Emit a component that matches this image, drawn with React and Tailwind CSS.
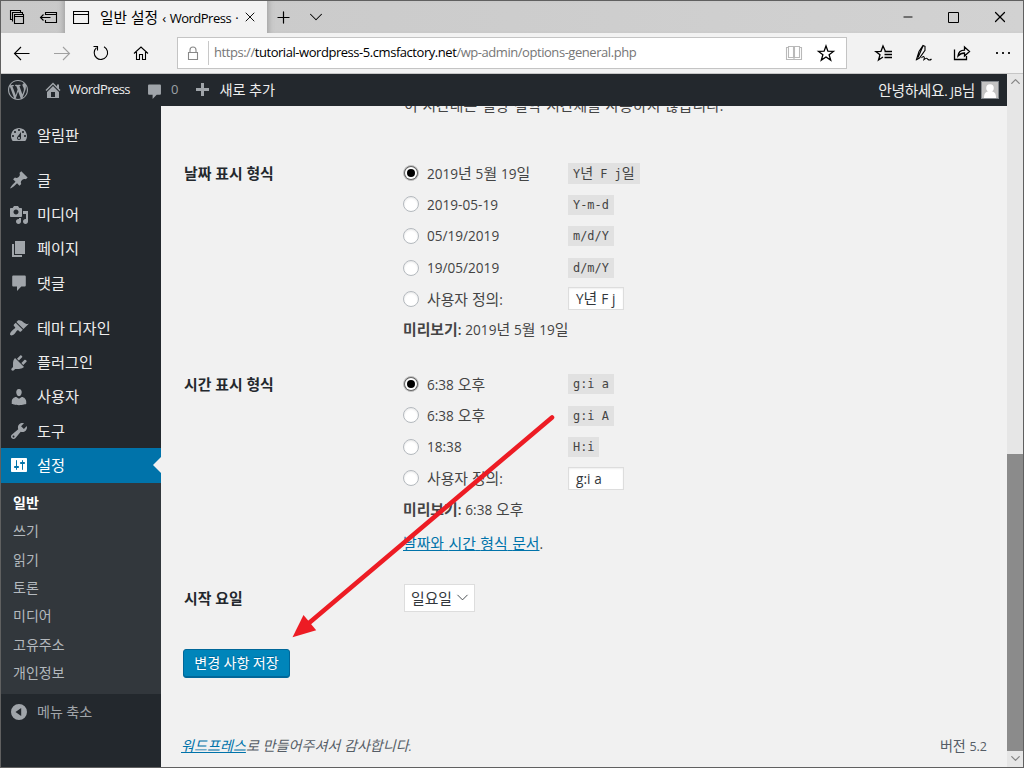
import { Minus, X, Plus, ChevronDown, ChevronUp } from 'lucide-react';

const paths = {
  wordpress: 'M20 10c0-5.51-4.49-10-10-10C4.48 0 0 4.49 0 10c0 5.52 4.48 10 10 10 5.51 0 10-4.48 10-10zM7.78 15.37L4.37 6.22c.55-.02 1.17-.08 1.17-.08.5-.06.44-1.13-.06-1.11 0 0-1.45.11-2.37.11-.18 0-.37 0-.58-.01C4.12 2.69 6.87 1.11 10 1.11c2.33 0 4.45.87 6.05 2.34-.68-.11-1.65.39-1.65 1.58 0 .74.45 1.36.9 2.1.35.61.55 1.36.55 2.46 0 1.49-1.4 5-1.4 5l-3.03-8.37c.54-.02.82-.17.82-.17.5-.05.44-1.25-.06-1.22 0 0-1.44.12-2.38.12-.87 0-2.33-.12-2.33-.12-.5-.03-.56 1.2-.06 1.22l.92.08 1.26 3.41zM17.41 10c.24-.64.74-1.87.43-4.25.7 1.29 1.05 2.71 1.05 4.25 0 3.29-1.73 6.24-4.4 7.78.97-2.59 1.94-5.2 2.92-7.78zM6.1 18.09C3.12 16.65 1.11 13.53 1.11 10c0-1.3.23-2.48.72-3.59C3.25 10.3 4.67 14.2 6.1 18.09zm4.03-6.63l2.58 6.98c-.86.29-1.76.45-2.71.45-.79 0-1.57-.11-2.29-.33.81-2.38 1.62-4.74 2.42-7.1z',
  home: 'M16 8.5l1.53 1.53-1.06 1.06L10 4.6l-6.47 6.49-1.06-1.06L10 2.5l4 4v-2h2v4zm-6-2.46l6 5.99V18H4v-5.97zM12 17v-5H8v5h4z',
  plus: 'M17 7v3h-5v5H9v-5H4V7h5V2h3v5h5z',
  dashboard: 'M3.76 16h12.48c1.1-1.37 1.76-3.11 1.76-5 0-4.42-3.58-8-8-8s-8 3.58-8 8c0 1.89 .66 3.63 1.76 5zM10 4c.55 0 1 .45 1 1s-.45 1-1 1-1-.45-1-1 .45-1 1-1zM6 6c.55 0 1 .45 1 1s-.45 1-1 1-1-.45-1-1 .45-1 1-1zm8 0c.55 0 1 .45 1 1s-.45 1-1 1-1-.45-1-1 .45-1 1-1zm-5.37 5.55L12 7v6c0 1.1-.9 2-2 2s-2-.9-2-2c0-.57.24-1.08.63-1.45zM4 10c.55 0 1 .45 1 1s-.45 1-1 1-1-.45-1-1 .45-1 1-1zm12 0c.55 0 1 .45 1 1s-.45 1-1 1-1-.45-1-1 .45-1 1-1zm-5 3c0-.55-.45-1-1-1s-1 .45-1 1 .45 1 1 1 1-.45 1-1z',
  post: 'M10.44 3.02l1.82-1.82 6.36 6.35-1.83 1.82c-1.05-.68-2.48-.57-3.41.36l-.75.75c-.92.93-1.04 2.35-.35 3.41l-1.83 1.82-2.41-2.41-2.8 2.79c-.42.42-3.38 2.71-3.8 2.29s1.86-3.39 2.28-3.81l2.79-2.79L4.1 9.36l1.83-1.82c1.05.69 2.48.57 3.4-.36l.75-.75c.93-.92 1.05-2.35.36-3.41z',
  media: 'M13 11V4c0-.55-.45-1-1-1h-1.67L9 1H5L3.67 3H2c-.55 0-1 .45-1 1v7c0 .55.45 1 1 1h10c.55 0 1-.45 1-1zM7 4.5c1.38 0 2.5 1.12 2.5 2.5S8.38 9.5 7 9.5 4.5 8.38 4.5 7 5.62 4.5 7 4.5zM14 6h5v10.5c0 1.38-1.12 2.5-2.5 2.5S14 17.88 14 16.5s1.12-2.5 2.5-2.5c.17 0 .34.02.5.05V9h-3V6zm-4 8.05V13h2v3.5c0 1.38-1.12 2.5-2.5 2.5S7 17.88 7 16.5 8.12 14 9.5 14c.17 0 .34.02.5.05z',
  page: 'M6 15V2h10v13H6zm-1 1h8v2H3V5h2v11z',
  comments: 'M4.5 2.5h11c.8 0 1.3.5 1.3 1.3v8.4c0 .8-.5 1.3-1.3 1.3h-3.2L8 18v-4.500H4.500c-.8 0-1.300-.5-1.300-1.300V3.800c0-.8.5-1.300 1.300-1.300z',
  appearance: 'M14.48 11.06L7.41 3.99l1.5-1.5c.5-.56 2.3-.47 3.51.32 1.21.8 1.43 1.28 2.91 2.1 1.18.64 2.45 1.26 4.45.85zm-.71.71L6.7 4.7 4.93 6.47c-.39.39-.39 1.02 0 1.41l1.06 1.06c.39.39.39 1.03 0 1.42-.6.6-1.43 1.11-2.21 1.69-.35.26-.7.53-1.01.84C1.43 14.23.4 16.08 1.4 17.07c.99 1 2.84-.03 4.18-1.36.31-.31.58-.66.85-1.02.57-.78 1.08-1.61 1.69-2.21.39-.39 1.02-.39 1.41 0l1.06 1.06c.39.39 1.02.39 1.41 0z',
  plugins: 'M13.11 4.36L9.87 7.6 8 5.73l3.24-3.24c.35-.34 1.05-.2 1.56.32.52.51.66 1.21.31 1.55zm-8 1.77l.91-1.12 9.01 9.01-1.19.84c-.71.71-2.63 1.16-3.82 1.16H6.14L4.9 17.26c-.59.59-1.54.59-2.12 0-.59-.58-.59-1.53 0-2.12l1.24-1.24v-3.88c0-1.13.4-3.19 1.09-3.89zm7.26 3.97l3.24-3.24c.34-.35 1.04-.21 1.55.31.52.51.66 1.21.31 1.55l-3.24 3.25z',
  users: 'M10 9.25c-2.27 0-2.73-3.44-2.73-3.44C7 4.02 7.82 2 9.97 2c2.16 0 2.98 2.02 2.71 3.81 0 0-.41 3.44-2.68 3.44zm0 2.57L12.72 10c2.39 0 4.52 2.33 4.52 4.53v2.49s-3.65 1.13-7.24 1.13c-3.65 0-7.24-1.13-7.24-1.13v-2.49c0-2.25 1.94-4.48 4.47-4.48z',
  tools: 'M16.68 9.77c-1.34 1.34-3.3 1.67-4.95.99l-5.41 6.52c-.99.99-2.59.99-3.58 0s-.99-2.59 0-3.57l6.52-5.42c-.68-1.65-.35-3.61.99-4.95 1.28-1.28 3.12-1.62 4.72-1.06l-2.89 2.89 2.82 2.82 2.86-2.87c.53 1.58.18 3.39-1.08 4.65zM3.81 16.21c.4.39 1.04.39 1.43 0 .4-.4.4-1.04 0-1.43-.39-.4-1.03-.4-1.43 0-.39.39-.39 1.03 0 1.43z',
  settings: 'M18 16V4c0-.55-.45-1-1-1H3c-.55 0-1 .45-1 1v12c0 .55.45 1 1 1h14c.55 0 1-.45 1-1zM8 11h1c.55 0 1 .45 1 1s-.45 1-1 1H8v1.5c0 .28-.22.5-.5.5s-.5-.22-.5-.5V13H6c-.55 0-1-.45-1-1s.45-1 1-1h1V5.5c0-.28.22-.5.5-.5s.5.22.5.5V11zm5-2h-1c-.55 0-1-.45-1-1s.45-1 1-1h1V5.5c0-.28.22-.5.5-.5s.5.22.5.5V7h1c.55 0 1 .45 1 1s-.45 1-1 1h-1v5.5c0 .28-.22.5-.5.5s-.5-.22-.5-.5V9z',
  collapse: 'M10 2a8 8 0 1 0 0 16 8 8 0 0 0 0-16zm2.200 4v8L6.500 10z',
};

const menu = [
  { label: '알림판', icon: 'dashboard' },
  { divider: true },
  { label: '글', icon: 'post' },
  { label: '미디어', icon: 'media' },
  { label: '페이지', icon: 'page' },
  { label: '댓글', icon: 'comments' },
  { divider: true },
  { label: '테마 디자인', icon: 'appearance' },
  { label: '플러그인', icon: 'plugins' },
  { label: '사용자', icon: 'users' },
  { label: '도구', icon: 'tools' },
  { label: '설정', icon: 'settings', active: true },
];

const submenu = ['일반', '쓰기', '읽기', '토론', '미디어', '고유주소', '개인정보'];

const dateFormats = [
  { label: '2019년 5월 19일', code: 'Y년 F j일', checked: true },
  { label: '2019-05-19', code: 'Y-m-d' },
  { label: '05/19/2019', code: 'm/d/Y' },
  { label: '19/05/2019', code: 'd/m/Y' },
];

const timeFormats = [
  { label: '6:38 오후', code: 'g:i a', checked: true },
  { label: '6:38 오후', code: 'g:i A' },
  { label: '18:38', code: 'H:i' },
];

function Icon({ name, size = 20, className = '' }) {
  return (
    <svg width={size} height={size} viewBox="0 0 20 20" fill="currentColor" fillRule="evenodd" className={`shrink-0 ${className}`}>
      <path d={paths[name]} />
    </svg>
  );
}

// Hangul runs are set a little larger than the latin text around them
function Mixed({ text, ko = 'text-[1.13em]' }) {
  return text.split(/([가-힣]+)/).map((part, i) =>
    i % 2 ? <span key={i} className={ko}>{part}</span> : part
  );
}

function Body({ text }) {
  return <Mixed text={text} ko="text-[1.095em]" />;
}

function Line({ children, className = '' }) {
  return (
    <svg viewBox="0 0 20 20" width="20" height="20" fill="none" stroke="currentColor" strokeWidth="1.1" className={`shrink-0 ${className}`}>
      {children}
    </svg>
  );
}

function TitleBar() {
  return (
    <div className="flex h-8 bg-linear-to-r from-[#c9c9c9] via-[#cdcdcd] to-[#d2d2d2] text-black">
      <div className="flex w-16 items-center shadow-[inset_-6px_0_6px_-5px_#999]">
        <Line className="ml-1.5">
          <path d="M5.500 12.500h-2v-9h10v2M5.500 14.500v-9h10v2M7.500 7.500h9v9h-9zM7.500 9.500h9" />
        </Line>
        <Line className="ml-3">
          <path d="M6.500 8V5.500h11v10h-11V13M6.500 7.500h11M1.500 10.500h10M4.500 7.500l-3 3 3 3" />
        </Line>
      </div>
      <div className="flex w-[202px] items-center bg-[#f2f2f2] pl-2">
        <Line>
          <path d="M.5 4.500h15v12H.5zM.5 7.500h15" />
        </Line>
        <span className="ml-[7px] w-[137px] text-[13px] tracking-[-0.5px] whitespace-nowrap [word-spacing:1.2px]">
          <Mixed text="일반 설정 ‹ WordPress ·" ko="text-[1.13em] tracking-normal" />
        </span>
        <X size={16} strokeWidth={1.4} className="ml-[5px] shrink-0" />
      </div>
      <div className="flex flex-1 items-center shadow-[inset_6px_0_6px_-5px_#999]">
        <Plus size={19} strokeWidth={1.5} className="ml-[7px]" />
        <ChevronDown size={22} strokeWidth={1.1} className="ml-3" />
        <div className="ml-auto flex items-center">
          <Minus size={14} strokeWidth={1.6} />
          <svg width="11" height="11" viewBox="0 0 11 11" fill="none" stroke="currentColor" className="ml-[33px]"><path d="M.5.500h10v10H.5z" /></svg>
          <X size={18} strokeWidth={1.6} className="mr-[14px] ml-8" />
        </div>
      </div>
    </div>
  );
}

function Toolbar() {
  return (
    <div className="flex h-[41px] items-center border-b border-[#c6c6c6] bg-[#f2f2f2] pl-[11px] text-black">
      <Line><path d="M17.500 10.500h-15M9 4l-6.500 6.500L9 17" /></Line>
      <Line className="ml-5 text-[#a0a0a0]"><path d="M2 10.500h15M11 4l6.500 6.500L11 17" /></Line>
      <Line className="ml-[19px]"><path d="M5.500 4.700a6.700 6.700 0 1 0 7.500-.9M2.500 3.500h4v4" /></Line>
      <Line className="ml-5"><path d="M3 10.500l7-6.500 7 6.500M5.500 9v7.500h3V11.500h3v5h3V9" /></Line>
      <div className="ml-[26px] flex h-8 w-[670px] items-center border border-[#c4c4c4] bg-white">
        <Line className="ml-[5px] text-[#888]"><path d="M5.500 9.500h9v7h-9zM7 9.500V7a3 3 0 0 1 6 0v2.500" /></Line>
        <div className="ml-[5px] h-6 w-px bg-[#c8c8c8]" />
        <div className="ml-[5px] text-[13px] tracking-[-0.45px] whitespace-nowrap text-[#767676]">
          https://<span className="text-black">tutorial-wordpress-5.cmsfactory.net</span>/wp-admin/options-general.php
        </div>
        <Line className="ml-auto text-[#b9b9b9]">
          <path d="M4.500 4.500h-2v12h15v-12h-2M4.500 3.500h5v11h-5zM10.500 3.500h5v11h-5zM10 14.500v2" />
        </Line>
        <Line className="mr-2.5 ml-3">
          <path d="M10 3l1.900 5.200 5.600.2-4.400 3.400 1.600 5.300L10 14l-4.700 3.100 1.600-5.300-4.400-3.400 5.600-.2z" strokeWidth="1.300" />
        </Line>
      </div>
      <Line className="ml-[27px]">
        <path d="M11.500 8.500L9 3 7 8.300l-5.200.2L6 11.800 4.500 17 9 14M10.500 11.500h7.500M10.500 14.500h7.500M10.500 8.500h7.500" strokeWidth="1.300" />
      </Line>
      <Line className="ml-5">
        <path d="M2.500 16.500L5 8.500l4-6 2 .8v4L5.500 15zM9 3L4 14.500M2 17l3.500-2M7.500 15c2-2.500 3.500-1.500 2.500 1.500 2-1.500 3-2 4 0 1.500 1 2.500.5 3.500-.5" />
      </Line>
      <Line className="ml-[18px]">
        <path d="M2.500 6.500v10h12V13M6 13c.5-4 3-5.800 6.500-5.800V4l5 4.500-5 4.500V10c-2.500 0-4.500.8-6.500 3z" strokeWidth="1.300" />
      </Line>
      <div className="ml-[24px] flex gap-1">
        {[0, 1, 2].map((n) => <span key={n} className="size-0.5 bg-[#222]" />)}
      </div>
    </div>
  );
}

function AdminBar() {
  return (
    <div className="flex h-8 items-center bg-[#23282d] pl-[7px] text-[13px] text-[#eee]">
      <Icon name="wordpress" className="text-[#a0a5aa]" />
      <Icon name="home" className="ml-[15px] text-[#a0a5aa]" />
      <span className="ml-1.5 tracking-[-0.55px]">WordPress</span>
      <Icon name="comments" size={19} className="mt-0.5 ml-[15px] text-[#a0a5aa]" />
      <span className="ml-[7px] text-[#9ca1a6]">0</span>
      <Icon name="plus" size={20} className="mt-0.5 ml-[14px] text-[#a0a5aa]" />
      <span className="ml-[7px]"><Mixed text="새로 추가" ko="text-[14.2px]" /></span>
      <span className="ml-auto tracking-[-0.3px]"><Mixed text="안녕하세요. JB님" /></span>
      <div className="mr-2 ml-1.5 size-[18px] border border-[#82878c] bg-[#c3c3c3]">
        <svg viewBox="0 0 16 16" fill="white"><circle cx="8" cy="6" r="3.800" /><path d="M2 16c0-5 2-7 6-7s6 2 6 7z" /></svg>
      </div>
    </div>
  );
}

function Sidebar() {
  return (
    <aside className="w-40 shrink-0 bg-[#23282d] pt-3 text-[13.5px] text-[#eee]">
      {menu.map((item, i) =>
        item.divider ? (
          <div key={i} className="h-[11px]" />
        ) : (
          <div key={i} className={`relative flex h-[34.25px] items-center pl-2 ${item.active ? 'bg-[#0073aa] text-white' : ''}`}>
            <Icon name={item.icon} className={item.active ? 'text-white' : 'text-[#a0a5aa]'} />
            <span className="ml-2"><Mixed text={item.label} /></span>
            {item.active && (
              <span className="absolute top-[9px] right-0 border-y-8 border-r-8 border-y-transparent border-r-[#f1f1f1]" />
            )}
          </div>
        )
      )}
      <ul className="h-[211.5px] bg-[#32373c] pt-1.5 pl-3 text-[14px] text-[#b4b9be]">
        {submenu.map((label, i) => (
          <li key={label} className={`flex h-[28.3px] items-center ${i === 0 ? 'font-semibold text-white' : ''}`}>
            {label}
          </li>
        ))}
      </ul>
      <div className="flex h-[35px] items-center pl-2 text-[12.5px] text-[#a0a5aa]">
        <Icon name="collapse" />
        <span className="ml-2"><Mixed text="메뉴 축소" /></span>
      </div>
    </aside>
  );
}

function Radio({ checked }) {
  return checked ? (
    <span className="flex size-4 items-center justify-center rounded-full border border-[#c4c4c4] bg-[#666] p-px">
      <span className="flex size-3 items-center justify-center rounded-full bg-white">
        <span className="size-2 rounded-full bg-black" />
      </span>
    </span>
  ) : (
    <span className="size-4 rounded-full border border-[#b4b9be] bg-white shadow-[inset_0_1px_2px_rgba(0,0,0,0.1)]" />
  );
}

function FormatField({ title, formats, custom, preview, children }) {
  return (
    <div className="flex">
      <div className="w-[220px] pt-[5px] pl-px font-semibold text-[#23282d]"><Body text={title} /></div>
      <div>
        {formats.map((f) => (
          <div key={f.code} className="flex h-[31.6px] items-center">
            <Radio checked={f.checked} />
            <span className={`ml-2 w-[141px] ${/[가-힣]/.test(f.label) ? '' : 'pt-px'}`}><Body text={f.label} /></span>
            <code className="mt-px bg-[#e1e1e1] px-[5px] pt-px font-['DejaVu_Sans_Mono','Noto_Sans_CJK_KR',monospace] text-[11.9px] leading-[19px] [word-spacing:0]">
              <Mixed text={f.code} ko="text-[1.18em]" />
            </code>
          </div>
        ))}
        <div className="flex h-[31px] items-center">
          <Radio />
          <span className="ml-2 w-[141px]"><Body text="사용자 정의:" /></span>
          <div className="h-[23px] w-14 border border-[#ddd] bg-white px-[7px] leading-[21px] whitespace-pre text-[#32373c] shadow-[inset_0_1px_2px_rgba(0,0,0,0.07)]">
            <Body text={custom} />
          </div>
        </div>
        <div className="flex h-[31px] items-center pb-px whitespace-pre">
          <strong className="font-semibold"><Body text="미리보기:" /></strong>
          <span><Body text={` ${preview}`} /></span>
        </div>
        {children}
      </div>
    </div>
  );
}

function Settings() {
  return (
    <main className="flex flex-1 flex-col overflow-hidden pr-5 pl-[22px] text-[13.6px] [word-spacing:0.3px] text-[#444]">
      <div className="-mt-3 ml-[221px] h-[22px] leading-[22px] [word-spacing:1.2px]">
        <Body text="이 시간대는 일광 절약 시간제를 사용하지 않습니다." />
      </div>
      <div className="mt-[41px]">
        <FormatField title="날짜 표시 형식" formats={dateFormats} custom="Y년 F j" preview="2019년 5월 19일" />
      </div>
      <div className="mt-[22.600px]">
        <FormatField title="시간 표시 형식" formats={timeFormats} custom="g:i a" preview="6:38 오후">
          <p className="mt-1.5 leading-6 [word-spacing:0.9px]">
            <a href="#" className="text-[#0073aa] underline"><Body text="날짜와 시간 형식 문서" /></a>.
          </p>
        </FormatField>
      </div>
      <div className="mt-7 flex h-7 items-center">
        <div className="w-[221px] pt-px pl-px font-semibold text-[#23282d]"><Body text="시작 요일" /></div>
        <div className="flex h-7 w-[71px] items-center border border-[#ddd] bg-white pl-1.5 text-[#32373c]">
          <Body text="일요일" />
          <ChevronDown size={19} strokeWidth={1.1} className="ml-px shrink-0" />
        </div>
      </div>
      <button className="mt-[37px] h-[29px] w-[107px] rounded-[3px] border border-[#006799] bg-[#0085ba] pb-px text-[12.5px] text-white shadow-[inset_0_-1px_0_#006799] [text-shadow:0_-1px_1px_#006799]">
        <Mixed text="변경 사항 저장" />
      </button>
      <footer className="mt-auto -ml-0.5 flex h-[43px] justify-between text-[12.5px] leading-[44px] text-[#555d66]">
        <p className="italic"><a href="#" className="text-[#0073aa] underline"><Mixed text="워드프레스" /></a><Mixed text="로 만들어주셔서 감사합니다." /></p>
        <p><Mixed text="버전 5.2" /></p>
      </footer>
    </main>
  );
}

export default function App() {
  return (
    <div className="relative flex h-screen w-screen flex-col overflow-hidden border border-[#606060] bg-[#f1f1f1] font-['Open_Sans','Noto_Sans_CJK_KR',sans-serif]">
      <TitleBar />
      <Toolbar />
      <div className="flex min-h-0 flex-1">
        <div className="flex flex-1 flex-col">
          <AdminBar />
          <div className="flex min-h-0 flex-1">
            <Sidebar />
            <Settings />
          </div>
        </div>
        <div className="flex w-4 flex-col items-center bg-[#e6e6e6] text-[#858585]">
          <ChevronUp size={15} strokeWidth={2} />
          <div className="mt-auto h-[297px] w-full bg-[#8b8b8b]" />
          <ChevronDown size={15} strokeWidth={2} className="mb-px" />
        </div>
      </div>
      {/* Callout arrow pointing at the save button */}
      <svg className="pointer-events-none absolute top-[409px] left-[287px]" width="272" height="232" viewBox="288 410 272 232">
        <path d="M552 417.500L309 623" stroke="#ed1c24" strokeWidth="4.600" strokeLinecap="round" />
        <path d="M292.500 637.200L303.500 615l12.700 15.200z" fill="#ed1c24" />
      </svg>
    </div>
  );
}
